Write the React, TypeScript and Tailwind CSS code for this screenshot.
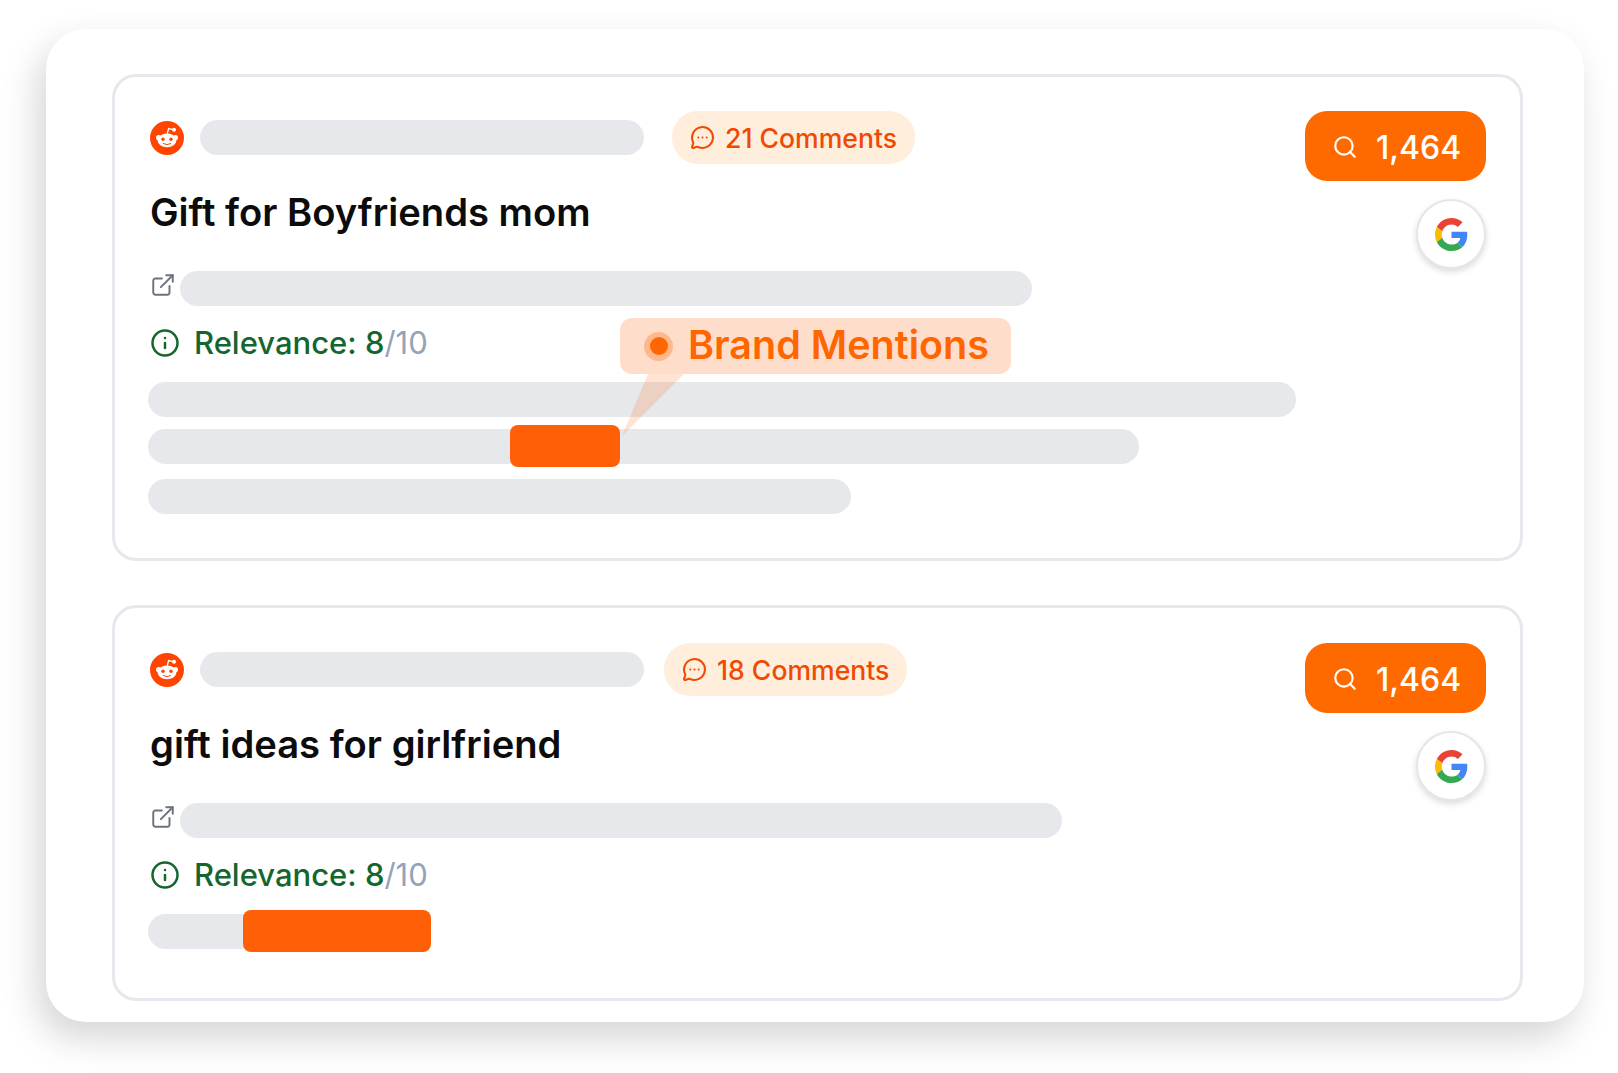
import { ExternalLink, Info, MessageCircleMore, Search } from "lucide-react";

function RedditIcon() {
	return (
		<svg viewBox="0 0 34 34" className="w-[34px] h-[34px] shrink-0">
			<circle cx="17" cy="17" r="17" fill="#ff4500" />
			<path d="M17.2 13 L18.6 7.6 L23 8.6" fill="none" stroke="#fff" strokeWidth="1.3" />
			<circle cx="24" cy="8.8" r="2" fill="#fff" />
			<circle cx="8.6" cy="16.6" r="2.6" fill="#fff" />
			<circle cx="25.4" cy="16.6" r="2.6" fill="#fff" />
			<ellipse cx="17" cy="19.4" rx="9.4" ry="6.8" fill="#fff" />
			<circle cx="13" cy="18.2" r="1.7" fill="#ff4500" />
			<circle cx="21" cy="18.2" r="1.7" fill="#ff4500" />
			<path d="M13 22.4 Q17 24.8 21 22.4" fill="none" stroke="#ff4500" strokeWidth="1" />
		</svg>
	);
}

function GoogleIcon() {
	return (
		<svg viewBox="0 0 48 48" className="w-[33px] h-[33px]">
			<path fill="#ea4335" d="M24 9.5c3.5 0 6.700 1.200 9.200 3.600l6.900-6.900C35.900 2.400 30.500 0 24 0 14.600 0 6.500 5.400 2.600 13.200l8 6.200C12.500 13.700 17.800 9.500 24 9.500z" />
			<path fill="#4285f4" d="M47 24.600c0-1.600-.1-3.100-.4-4.600H24v9h12.900c-.6 3-2.200 5.500-4.700 7.200l7.700 6C44.400 38 47 31.800 47 24.600z" />
			<path fill="#fbbc05" d="M10.600 28.600c-.5-1.500-.8-3-.8-4.600s.3-3.200.8-4.600l-8-6.200C.9 16.500 0 20.100 0 24s.9 7.500 2.600 10.800l8-6.200z" />
			<path fill="#34a853" d="M24 48c6.500 0 11.900-2.100 15.900-5.800l-7.700-6c-2.200 1.400-4.900 2.300-8.200 2.300-6.200 0-11.500-4.200-13.400-9.900l-8 6.200C6.500 42.600 14.600 48 24 48z" />
		</svg>
	);
}

function Bar({ className }: { className: string }) {
	return <div className={`h-[35px] rounded-full bg-[#e7e8ec] ${className}`}></div>;
}

function Card({
	comments,
	title,
	topBarGap,
	urlWidth,
	height,
	children,
}: {
	comments: number;
	title: string;
	topBarGap: string;
	urlWidth: string;
	height: string;
	children: React.ReactNode;
}) {
	return (
		<div className={`relative flex justify-between rounded-[24px] border-[3px] border-[#e7e8ed] bg-white pl-[33px] pr-[34px] ${height}`}>
			<div className="flex-1 min-w-0">
				<div className="flex items-center h-[53px] pl-[2px]">
					<RedditIcon />
					<Bar className="w-[444px] ml-[16px]" />
					<div className={`flex items-center h-[53px] w-[243px] rounded-[26px] bg-[#ffeedb] pl-[18px] text-[26.6px] font-medium text-[#ef4a04] ${topBarGap}`}>
						<MessageCircleMore className="w-[25px] h-[25px] mr-[10px] shrink-0" strokeWidth={2} />
						<span className="pt-[3px]">{comments} Comments</span>
					</div>
				</div>
				<h2 className="mt-[20px] h-[56px] pl-[2px] text-[38.2px] leading-[56px] font-semibold text-[#0c0c0c]">{title}</h2>
				<div className="flex items-center mt-[31px] pl-[2px]">
					<ExternalLink className="w-[26px] h-[26px] mr-[4px] mb-[7px] text-[#6b7280] shrink-0" strokeWidth={1.8} />
					<Bar className={urlWidth} />
				</div>
				<div className="flex items-center h-[36px] mt-[19px] pl-[2px] text-[31px] font-medium text-[#15652f]">
					<Info className="w-[30px] h-[30px] mr-[14px] shrink-0" strokeWidth={2} />
					Relevance: 8<span className="font-normal text-[#94a3b8]">/10</span>
				</div>
				{children}
			</div>
			<div className="flex flex-col items-end shrink-0">
				<div className="flex items-center h-[70px] w-[181px] rounded-[22px] bg-[#ff6a00] pl-[27px] pt-[2px] text-[32px] font-medium text-white">
					<Search className="w-[26px] h-[26px] mr-[18px]" strokeWidth={2} />
					<span className="pt-[1px]">1,464</span>
				</div>
				<div className="flex items-center justify-center w-[70px] h-[70px] mt-[18px] rounded-full border-2 border-[#e5e6eb] bg-white shadow-[0_3px_6px_rgba(0,0,0,0.14)]">
					<GoogleIcon />
				</div>
			</div>
		</div>
	);
}

export default function App() {
	return (
		<div className="w-full h-[1073px] overflow-hidden bg-white pl-[46px] pt-[29px] font-['Inter',sans-serif]">
			<div className="w-[1538px] h-[993px] rounded-[40px] bg-white pl-[66px] pr-[61px] pt-[45px] shadow-[-8px_16px_36px_rgba(0,0,0,0.17)]">
				<div className="flex flex-col gap-[44px]">
					<Card comments={21} title="Gift for Boyfriends mom" topBarGap="ml-[28px]" urlWidth="w-[852px]" height="h-[487px] pt-[34px]">
						<Bar className="w-[1148px] mt-[21px]" />
						<div className="relative mt-[12px] w-[991px]">
							<Bar className="w-full" />
							<div className="absolute left-[362px] top-[-4px] w-[110px] h-[42px] rounded-[8px] bg-[#ff6007]"></div>
						</div>
						<Bar className="w-[703px] mt-[15px]" />
						<div className="absolute left-[505px] top-[241px] flex items-center w-[391px] h-[56px] rounded-[12px] bg-[#fedecb] pl-[24px] pb-[1px] text-[39.5px] font-semibold text-[#ff6600]">
							<span className="flex items-center justify-center w-[29px] h-[29px] mt-[1px] mr-[15px] rounded-full bg-[#ffb88c]">
								<span className="w-[18px] h-[18px] rounded-full bg-[#ff6600]"></span>
							</span>
							Brand Mentions
						</div>
						<svg viewBox="0 0 62 62" className="absolute left-[507px] top-[297px] w-[62px] h-[62px]">
							<polygon points="26,0 62,0 0,62" fill="#ff6a00" fillOpacity="0.18" />
						</svg>
					</Card>
					<Card comments={18} title="gift ideas for girlfriend" topBarGap="ml-[20px]" urlWidth="w-[882px]" height="h-[396px] pt-[35px]">
						<div className="relative mt-[21px] w-[120px]">
							<Bar className="w-full" />
							<div className="absolute left-[95px] top-[-4px] w-[188px] h-[42px] rounded-[8px] bg-[#ff6007]"></div>
						</div>
					</Card>
				</div>
			</div>
		</div>
	);
}
